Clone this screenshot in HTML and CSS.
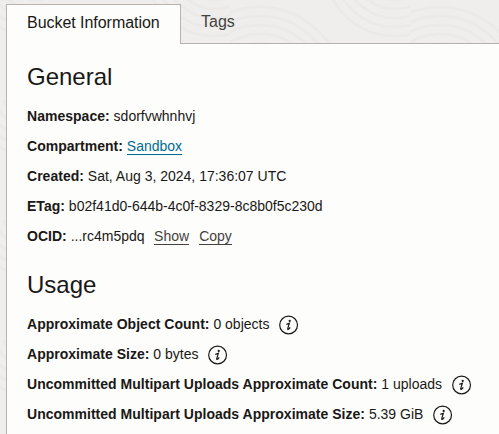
FILE: index.html
```
<!DOCTYPE html>
<html lang="en">
<head>
<meta charset="utf-8">
<title>Bucket Information</title>
<link rel="stylesheet" href="styles.css">
</head>
<body>
<svg class="texture" width="499" height="434" aria-hidden="true">
  <defs>
    <pattern id="rings" width="180" height="120" patternUnits="userSpaceOnUse" x="50" y="-20">
      <g fill="none" stroke="#ebeae9" stroke-width="3">
        <circle cx="30" cy="110" r="20"/><circle cx="30" cy="110" r="29"/><circle cx="30" cy="110" r="38"/><circle cx="30" cy="110" r="47"/><circle cx="30" cy="110" r="56"/><circle cx="30" cy="110" r="65"/><circle cx="30" cy="110" r="74"/><circle cx="30" cy="110" r="83"/>
        <circle cx="165" cy="-15" r="35"/><circle cx="165" cy="-15" r="44"/><circle cx="165" cy="-15" r="53"/><circle cx="165" cy="-15" r="62"/><circle cx="165" cy="-15" r="71"/>
      </g>
    </pattern>
    <symbol id="info" viewBox="0 0 20 20">
      <circle cx="9.6" cy="10" r="8.9" fill="none" stroke="currentColor" stroke-width="1.2"/>
      <circle cx="10.7" cy="5.9" r="1.1" fill="currentColor"/>
      <path d="M7.3 9.3Q8.7 9.1 10.3 8.3L8.8 13.3Q8.5 14.8 9.5 14.2Q10.4 13.6 11.2 12.4" fill="none" stroke="currentColor" stroke-width="1.2"/>
    </symbol>
  </defs>
  <rect width="499" height="434" fill="url(#rings)"/>
</svg>
<main class="page">
  <nav class="tabs">
    <a class="tab active">Bucket Information</a>
    <a class="tab">Tags</a>
  </nav>
  <div class="panel">
    <section>
      <h2>General</h2>
      <p><b>Namespace:</b><span> sdorfvwhnhvj</span></p>
      <p><b>Compartment: </b><a class="link">Sandbox</a></p>
      <p><b>Created:</b><span> Sat, Aug 3, 2024, 17:36:07 UTC</span></p>
      <p><b>ETag:</b><span> b02f41d0-644b-4c0f-8329-8c8b0f5c230d</span></p>
      <p><b>OCID:</b><span> ...rc4m5pdq</span><a class="action">Show</a><a class="action">Copy</a></p>
    </section>
    <section>
      <h2>Usage</h2>
      <p><b>Approximate Object Count:</b><span> 0 objects</span><svg class="info"><use href="#info"/></svg></p>
      <p><b>Approximate Size:</b><span> 0 bytes</span><svg class="info"><use href="#info"/></svg></p>
      <p><b>Uncommitted Multipart Uploads Approximate Count:</b><span> 1 uploads</span><svg class="info"><use href="#info"/></svg></p>
      <p><b>Uncommitted Multipart Uploads Approximate Size:</b><span> 5.39 GiB</span><svg class="info"><use href="#info"/></svg></p>
    </section>
  </div>
</main>
</body>
</html>
```
FILE: styles.css
```
* { box-sizing: border-box; }
body {
  margin: 0;
  height: 434px;
  overflow: hidden;
  background: #efeeed;
  color: #1a1816;
  font-family: "Liberation Sans", Arial, sans-serif;
  font-size: 14px;
}
.texture { position: absolute; inset: 0; z-index: -1; }
.page { height: 434px; padding: 4px 0 0 6px; display: flex; flex-direction: column; }
.tabs { display: flex; height: 40px; }
.tab {
  flex: 1;
  border-bottom: 1px solid #b4afab;
  padding: 8px 20px 0 20px;
  font-size: 16px;
  line-height: 20px;
  color: #45413e;
}
.tab.active {
  flex: none;
  width: 175px;
  padding: 8px 0 0 20px;
  border: 1px solid #b9b2ab;
  border-bottom: 0;
  background: #fdfdfc;
  color: #1a1816;
  letter-spacing: -0.04px;
}
.panel {
  flex: 1;
  padding: 17px 0 0 20px;
  border-left: 1px solid #b9b2ab;
  background: #fdfdfc;
}
section + section { margin-top: 18px; }
h2 { margin: 0 0 8px; font-size: 24px; font-weight: 400; line-height: 32px; }
p {
  display: flex;
  align-items: center;
  height: 30px;
  margin: 0;
  white-space: pre;
}
b, p span { transform: scaleY(1.07); }
b { letter-spacing: 0.02px; }
.link, .action { border-bottom: 1px solid currentColor; line-height: 15px; position: relative; top: 1px; }
.link { color: #006b8f; }
.action { color: #45413e; margin-left: 9.5px; }
.action + .action { margin-left: 10px; }
.info { width: 20px; height: 20px; margin-left: 9.5px; position: relative; top: 1px; }
```
